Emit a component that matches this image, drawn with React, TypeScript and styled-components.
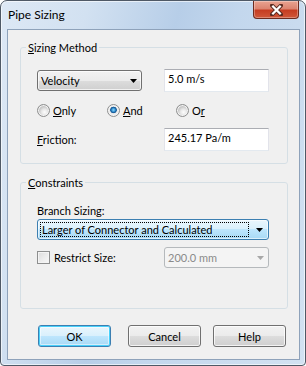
import styled, { createGlobalStyle } from "styled-components";

const FONT = `"Lato", "Liberation Sans", sans-serif`;

const GlobalStyle = createGlobalStyle`
  html, body { margin: 0; padding: 0; background: #fff; }
  body { font-family: ${FONT}; font-size: 11px; color: #000; }
  * { box-sizing: border-box; }
`;

function Arrow({ color = "#000" }: { color?: string }) {
  return (
    <svg width="7" height="4" viewBox="0 0 7 4">
      <path d="M0 0h7L3.5 4z" fill={color} />
    </svg>
  );
}

function CloseGlyph() {
  return (
    <svg width="13" height="12" viewBox="0 0 13 12">
      <path d="M2 1.5l9 9M11 1.5l-9 9" stroke="#5a2a20" strokeWidth="4" strokeLinecap="round" />
      <path d="M2.3 1.8l8.4 8.4M10.7 1.8l-8.4 8.4" stroke="#fff" strokeWidth="2.3" />
    </svg>
  );
}

export default function App() {
  return (
    <>
      <GlobalStyle />
      <Window>
        <TitleBar>
          <Title>Pipe Sizing</Title>
          <CloseButton>
            <CloseGlyph />
          </CloseButton>
        </TitleBar>

        <Client>
          <Group>
            <Legend>
              <U>S</U>izing Method
            </Legend>
            <GroupBody $bottom={12}>
              <Row>
                <Combo>
                  <ComboText>Velocity</ComboText>
                  <Arrow />
                </Combo>
                <TextBox>5.0 m/s</TextBox>
              </Row>

              <RadioRow>
                <Radio>
                  <RadioCircle />
                  <span>
                    <U>O</U>nly
                  </span>
                </Radio>
                <Radio>
                  <RadioCircle $checked />
                  <span>
                    <U>A</U>nd
                  </span>
                </Radio>
                <Radio>
                  <RadioCircle />
                  <span>
                    O<U>r</U>
                  </span>
                </Radio>
              </RadioRow>

              <Row $top={11}>
                <span>
                  <U>F</U>riction:
                </span>
                <TextBox>245.17 Pa/m</TextBox>
              </Row>
            </GroupBody>
          </Group>

          <Group $top={11}>
            <Legend>
              <U>C</U>onstraints
            </Legend>
            <GroupBody $top={13} $bottom={40}>
              <FieldLabel>Branch Sizing:</FieldLabel>
              <WideCombo>
                <FocusRect>Larger of Connector and Calculated</FocusRect>
                <Arrow />
              </WideCombo>
              <Row $top={7}>
                <CheckLabel>
                  <CheckBox />
                  <span>Restrict Size:</span>
                </CheckLabel>
                <Combo $disabled>
                  <ComboText>200.0 mm</ComboText>
                  <Arrow color="#a8a8a8" />
                </Combo>
              </Row>
            </GroupBody>
          </Group>

          <ButtonRow>
            <Button $default>OK</Button>
            <Button>Cancel</Button>
            <Button>Help</Button>
          </ButtonRow>
        </Client>
      </Window>
    </>
  );
}

const Window = styled.div`
  width: 306px;
  height: 366px;
  display: flex;
  flex-direction: column;
  border: 1px solid #4f5966;
  border-radius: 7px 7px 4px 4px;
  padding: 0 5px 5px 6px;
  background: linear-gradient(
    105deg,
    #dde8f5 0%,
    #d2e1f1 22%,
    #b7cee8 45%,
    #c3d7ed 60%,
    #d3e2f2 100%
  );
  box-shadow: inset 0 0 0 1px rgba(255, 255, 255, 0.6);
  overflow: hidden;
`;

const TitleBar = styled.div`
  height: 28px;
  display: flex;
  justify-content: space-between;
  align-items: flex-start;
  padding-left: 1px;
`;

const Title = styled.div`
  line-height: 27px;
  font-size: 12px;
  color: #000;
`;

const CloseButton = styled.div`
  width: 46px;
  height: 18px;
  margin-right: 1px;
  display: flex;
  align-items: center;
  justify-content: center;
  border: 1px solid #6d2b1f;
  border-top: none;
  border-radius: 0 0 4px 4px;
  background: linear-gradient(
    #e9a391 0%,
    #dc8470 45%,
    #c63d22 55%,
    #d0583a 100%
  );
  box-shadow: inset 0 0 0 1px rgba(255, 255, 255, 0.3);
`;

const Client = styled.div`
  flex: 1;
  display: flex;
  flex-direction: column;
  border: 1px solid #8ea2ba;
  background: #f0f0f0;
  padding: 10px 11px 12px 12px;
`;

const Group = styled.fieldset<{ $top?: number }>`
  margin: ${({ $top = 0 }) => $top}px 0 0 0;
  padding: 0;
  min-width: 0;
  border: 1px solid #d5dfe5;
  border-radius: 3px;
`;

const Legend = styled.legend`
  margin-left: 5px;
  padding: 0 2px;
  line-height: 15px;
`;

const GroupBody = styled.div<{ $top?: number; $bottom?: number }>`
  display: flex;
  flex-direction: column;
  padding: ${({ $top = 14 }) => $top}px 18px ${({ $bottom = 12 }) => $bottom}px 16px;
`;

const Row = styled.div<{ $top?: number }>`
  display: flex;
  justify-content: space-between;
  align-items: center;
  margin-top: ${({ $top = 0 }) => $top}px;
`;

const U = styled.span`
  text-decoration: underline;
  text-underline-offset: 1px;
`;

const Combo = styled.div<{ $disabled?: boolean }>`
  width: 105px;
  height: 21px;
  display: flex;
  align-items: center;
  justify-content: space-between;
  padding: 0 4px 0 3px;
  border: 1px solid ${({ $disabled }) => ($disabled ? "#b5b9bc" : "#707070")};
  border-radius: 3px;
  color: ${({ $disabled }) => ($disabled ? "#8a8a8a" : "#000")};
  background: ${({ $disabled }) =>
    $disabled
      ? "#f4f4f4"
      : "linear-gradient(#f2f2f2 0%, #ebebeb 50%, #dddddd 50%, #cfcfcf 100%)"};
  box-shadow: ${({ $disabled }) =>
    $disabled ? "none" : "inset 0 0 0 1px rgba(255, 255, 255, 0.7)"};
`;

const ComboText = styled.span`
  line-height: 15px;
`;

const WideCombo = styled.div`
  margin-top: 1px;
  height: 21px;
  display: flex;
  align-items: center;
  padding: 0 5px 0 2px;
  border: 1px solid #3c7fb1;
  border-radius: 3px;
  background: linear-gradient(#eaf6fd 0%, #d9f0fc 50%, #bee6fd 50%, #a7d9f5 100%);
  box-shadow: inset 0 0 0 1px rgba(255, 255, 255, 0.6);
  gap: 7px;
`;

const FocusRect = styled.div`
  flex: 1;
  height: 15px;
  line-height: 13px;
  padding-left: 1px;
  border: 1px dotted #000;
  white-space: nowrap;
  overflow: hidden;
`;

const TextBox = styled.div`
  width: 105px;
  height: 23px;
  padding: 1px 3px 0;
  line-height: 15px;
  background: #fff;
  border: 1px solid #e2e3ea;
  border-top-color: #abadb3;
  border-bottom-color: #e3e9ef;
`;

const RadioRow = styled.div`
  display: grid;
  grid-template-columns: 70px 69px auto;
  margin-top: 12px;
  height: 13px;
  align-items: center;
`;

const Radio = styled.label`
  display: flex;
  align-items: center;
  gap: 3px;
  line-height: 13px;
`;

const RadioCircle = styled.span<{ $checked?: boolean }>`
  width: 13px;
  height: 13px;
  flex-shrink: 0;
  border-radius: 50%;
  border: 1px solid #8e8f8f;
  background: ${({ $checked }) =>
    $checked
      ? "radial-gradient(circle at 50% 45%, #8fd6fb 0, #3c9ad7 1.6px, #1b5f9c 2.6px, #2a6aa4 3.1px, #e8e8e8 3.6px, #f8f8f8 100%)"
      : "radial-gradient(circle at 60% 65%, #fdfdfd 0, #e8e8e8 3px, #c8c8c8 5.5px)"};
  box-shadow: inset 0 0 0 1px #f4f4f4;
`;

const FieldLabel = styled.div`
  line-height: 15px;
`;

const CheckLabel = styled.label`
  display: flex;
  align-items: center;
  gap: 4px;
`;

const CheckBox = styled.span`
  width: 13px;
  height: 13px;
  border: 1px solid #8e8f8f;
  background: linear-gradient(135deg, #dcdcdc 0%, #eeeeee 60%, #f8f8f8 100%);
  box-shadow: inset 0 0 0 1px #f4f4f4;
`;

const ButtonRow = styled.div`
  display: flex;
  margin-top: 16px;
  padding-left: 18px;
  gap: 17px;

  & > :last-child {
    margin-left: -5px;
  }
`;

const Button = styled.div<{ $default?: boolean }>`
  width: 73px;
  height: 22px;
  display: flex;
  align-items: center;
  justify-content: center;
  border-radius: 3px;
  border: 1px solid ${({ $default }) => ($default ? "#3c7fb1" : "#707070")};
  background: ${({ $default }) =>
    $default
      ? "linear-gradient(#eaf6fd 0%, #d9f0fc 50%, #bee6fd 50%, #a7d9f5 100%)"
      : "linear-gradient(#f2f2f2 0%, #ebebeb 50%, #dddddd 50%, #cfcfcf 100%)"};
  box-shadow: ${({ $default }) =>
    $default
      ? "inset 0 0 0 1px #48d1fb, inset 0 0 0 2px rgba(255,255,255,0.5)"
      : "inset 0 0 0 1px rgba(255, 255, 255, 0.75)"};
`;
